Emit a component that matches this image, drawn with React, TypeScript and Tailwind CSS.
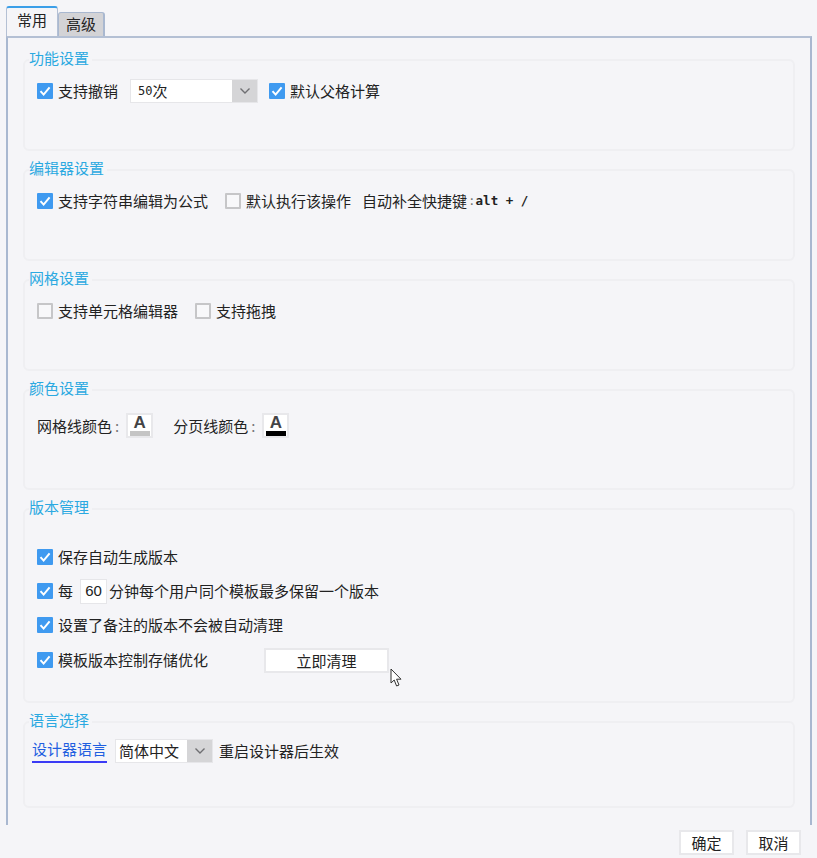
import { ReactNode } from "react";

const FONT = "font-['Noto_Sans_CJK_SC','Liberation_Sans',sans-serif]";

// blue tick box, unchecked one is just a grey outline
const Check = ({ on = true }: { on?: boolean }) =>
  on ? (
    <span className="flex h-4 w-4 shrink-0 items-center justify-center rounded-[1px] bg-[#3f9af0]">
      <svg width="12" height="12" viewBox="0 0 12 12" fill="none">
        <path d="M1.5 6.2 4.6 9.6 10.6 2.4" stroke="#fff" strokeWidth="2" />
      </svg>
    </span>
  ) : (
    <span className="h-4 w-4 shrink-0 rounded-[1px] border-2 border-[#c6c6c8] bg-[#f8f8fa]" />
  );

const Option = ({ on, children }: { on?: boolean; children: ReactNode }) => (
  <label className="flex items-center gap-[5px] whitespace-nowrap">
    <Check on={on} />
    <span>{children}</span>
  </label>
);

const Chevron = () => (
  <svg width="12" height="8" viewBox="0 0 12 8" fill="none">
    <path d="M1.5 1.5 6 6l4.5-4.5" stroke="#6f6f72" strokeWidth="1.4" />
  </svg>
);

const Select = ({ width, arrow, children }: { width: string; arrow: string; children: ReactNode }) => (
  <div className={`flex h-6 ${width} border border-[#e6e6e9] bg-white`}>
    <div className="flex flex-1 items-center pl-[3px]">{children}</div>
    <div className={`flex ${arrow} items-center justify-center bg-[#d5d5d7]`}>
      <Chevron />
    </div>
  </div>
);

const ColorButton = ({ bar }: { bar: string }) => (
  <div className="flex h-[25px] w-[27px] flex-col items-center border-2 border-[#e8e8eb] bg-white">
    <span className="mt-[1px] h-[14px] font-['Liberation_Sans',sans-serif] text-[17px] leading-[14px] font-bold text-[#444446]">
      A
    </span>
    <span className={`mt-[1px] h-[5px] w-5 ${bar}`} />
  </div>
);

const ColorField = ({ label }: { label: string }) => (
  <span className="whitespace-nowrap">
    {label}
    <span className="ml-[3px] text-[#777]">:</span>
  </span>
);

const Section = ({ title, height, children }: { title: string; height: string; children: ReactNode }) => (
  <section className={`relative ${height} rounded-[6px] border-2 border-[#efeff2]`}>
    <h3 className="absolute -top-[13px] left-[4px] bg-[#f5f5f8] pr-[3px] text-[15px] leading-5 text-[#2ba9e1]">
      {title}
    </h3>
    {children}
  </section>
);

const Button = ({ width, children }: { width: string; children: ReactNode }) => (
  <button className={`flex h-[25px] ${width} items-center justify-center border-2 border-[#e8e8eb] bg-white text-[15px] leading-none text-[#222]`}>
    {children}
  </button>
);

export default function App() {
  return (
    <div className={`relative flex h-[858px] w-[817px] flex-col bg-[#f5f5f8] pt-[6px] text-[15px] leading-5 text-[#222] ${FONT}`}>
      {/* tabs */}
      <div className="flex h-[30px] items-end pl-[6px]">
        <div className="flex h-[30px] w-[52px] items-center justify-center rounded-t-[3px] border-t-2 border-r border-l border-t-[#3b9fe8] border-r-[#b4c0d4] border-l-[#b4c0d4] pb-[5px]">
          常用
        </div>
        <div className="flex h-[24px] w-[47px] items-center justify-center rounded-t-[3px] border-t border-r-2 border-l border-[#a9b8d0] bg-[#d3d3d6] pb-[2px]">
          高级
        </div>
      </div>

      {/* panel, open at the bottom */}
      <div className="ml-[6px] mr-[5px] flex h-[789px] flex-col gap-[18px] border-t-2 border-r-2 border-l-2 border-[#a9b8d0] pt-[21px] pr-[15px] pl-[15px] [border-top-color:#b4c0d4]">
        <Section title="功能设置" height="h-[92px]">
          <div className="flex items-center pt-[18px] pl-[12px]">
            <Option>支持撤销</Option>
            <div className="ml-3">
              <Select width="w-[128px]" arrow="w-[25px]">
                <span className="flex items-center pl-[4px]">
                  <span className="font-['DejaVu_Sans_Mono',monospace] text-[12px]">50</span>
                  <span>次</span>
                </span>
              </Select>
            </div>
            <div className="ml-[11px]">
              <Option>默认父格计算</Option>
            </div>
          </div>
        </Section>

        <Section title="编辑器设置" height="h-[92px]">
          <div className="mt-[18px] ml-[12px] flex h-6 items-center">
            <Option>支持字符串编辑为公式</Option>
            <div className="ml-[17px]">
              <Option on={false}>默认执行该操作</Option>
            </div>
            <span className="ml-[11px] whitespace-nowrap">自动补全快捷键</span>
            <span className="ml-[1px] font-['DejaVu_Sans_Mono',monospace] text-[12.5px] font-bold whitespace-pre">
              <span className="font-normal text-[#777]">:</span>alt + /
            </span>
          </div>
        </Section>

        <Section title="网格设置" height="h-[92px]">
          <div className="mt-[18px] ml-[12px] flex h-6 items-center">
            <Option on={false}>支持单元格编辑器</Option>
            <div className="ml-[17px]">
              <Option on={false}>支持拖拽</Option>
            </div>
          </div>
        </Section>

        <Section title="颜色设置" height="h-[101px]">
          <div className="flex items-center pt-[22px] pl-[12px]">
            <ColorField label="网格线颜色" />
            <div className="ml-[7px]">
              <ColorButton bar="bg-[#c4c4c4]" />
            </div>
            <div className="ml-[20px]">
              <ColorField label="分页线颜色" />
            </div>
            <div className="ml-[7px]">
              <ColorButton bar="bg-black" />
            </div>
          </div>
        </Section>

        <Section title="版本管理" height="h-[195px]">
          <div className="flex flex-col pt-[35px] pl-[12px]">
            <div className="flex h-6 items-center">
              <Option>保存自动生成版本</Option>
            </div>
            <div className="mt-[10px] flex h-6 items-center">
              <Option>每</Option>
              <span className="mx-[2px] ml-[7px] flex h-[25px] w-[27px] items-center justify-center border border-[#e6e6e9] bg-white font-['Liberation_Sans',sans-serif] text-[15px]">
                60
              </span>
              <span className="whitespace-nowrap">分钟每个用户同个模板最多保留一个版本</span>
            </div>
            <div className="mt-[10px] flex h-6 items-center">
              <Option>设置了备注的版本不会被自动清理</Option>
            </div>
            <div className="mt-[11px] flex h-6 items-center">
              <Option>模板版本控制存储优化</Option>
              <div className="ml-[56px]">
                <Button width="w-[125px]">立即清理</Button>
              </div>
            </div>
          </div>
        </Section>

        <Section title="语言选择" height="h-[87px]">
          <div className="flex items-center pt-[16px] pl-[7px]">
            <span className="border-b-2 border-[#3b3bf5] pb-[2px] whitespace-nowrap text-[#1f5fe0]">设计器语言</span>
            <div className="ml-2">
              <Select width="w-[98px]" arrow="w-[25px]">
                <span className="whitespace-nowrap">简体中文</span>
              </Select>
            </div>
            <span className="ml-[6px] whitespace-nowrap">重启设计器后生效</span>
          </div>
        </Section>
      </div>

      {/* footer buttons */}
      <div className="mt-[5px] flex justify-end gap-3 pr-[16px]">
        <Button width="w-[55px]">确定</Button>
        <Button width="w-[55px]">取消</Button>
      </div>

      {/* mouse pointer sits over the page */}
      <svg className="absolute top-[668px] left-[390px]" width="14" height="20" viewBox="0 0 14 20" fill="none">
        <path d="M1 1v14l3.2-3 2.4 6 2.4-1-2.4-5.8h4.4L1 1Z" fill="#fff" stroke="#333" strokeWidth="1" />
      </svg>
    </div>
  );
}
